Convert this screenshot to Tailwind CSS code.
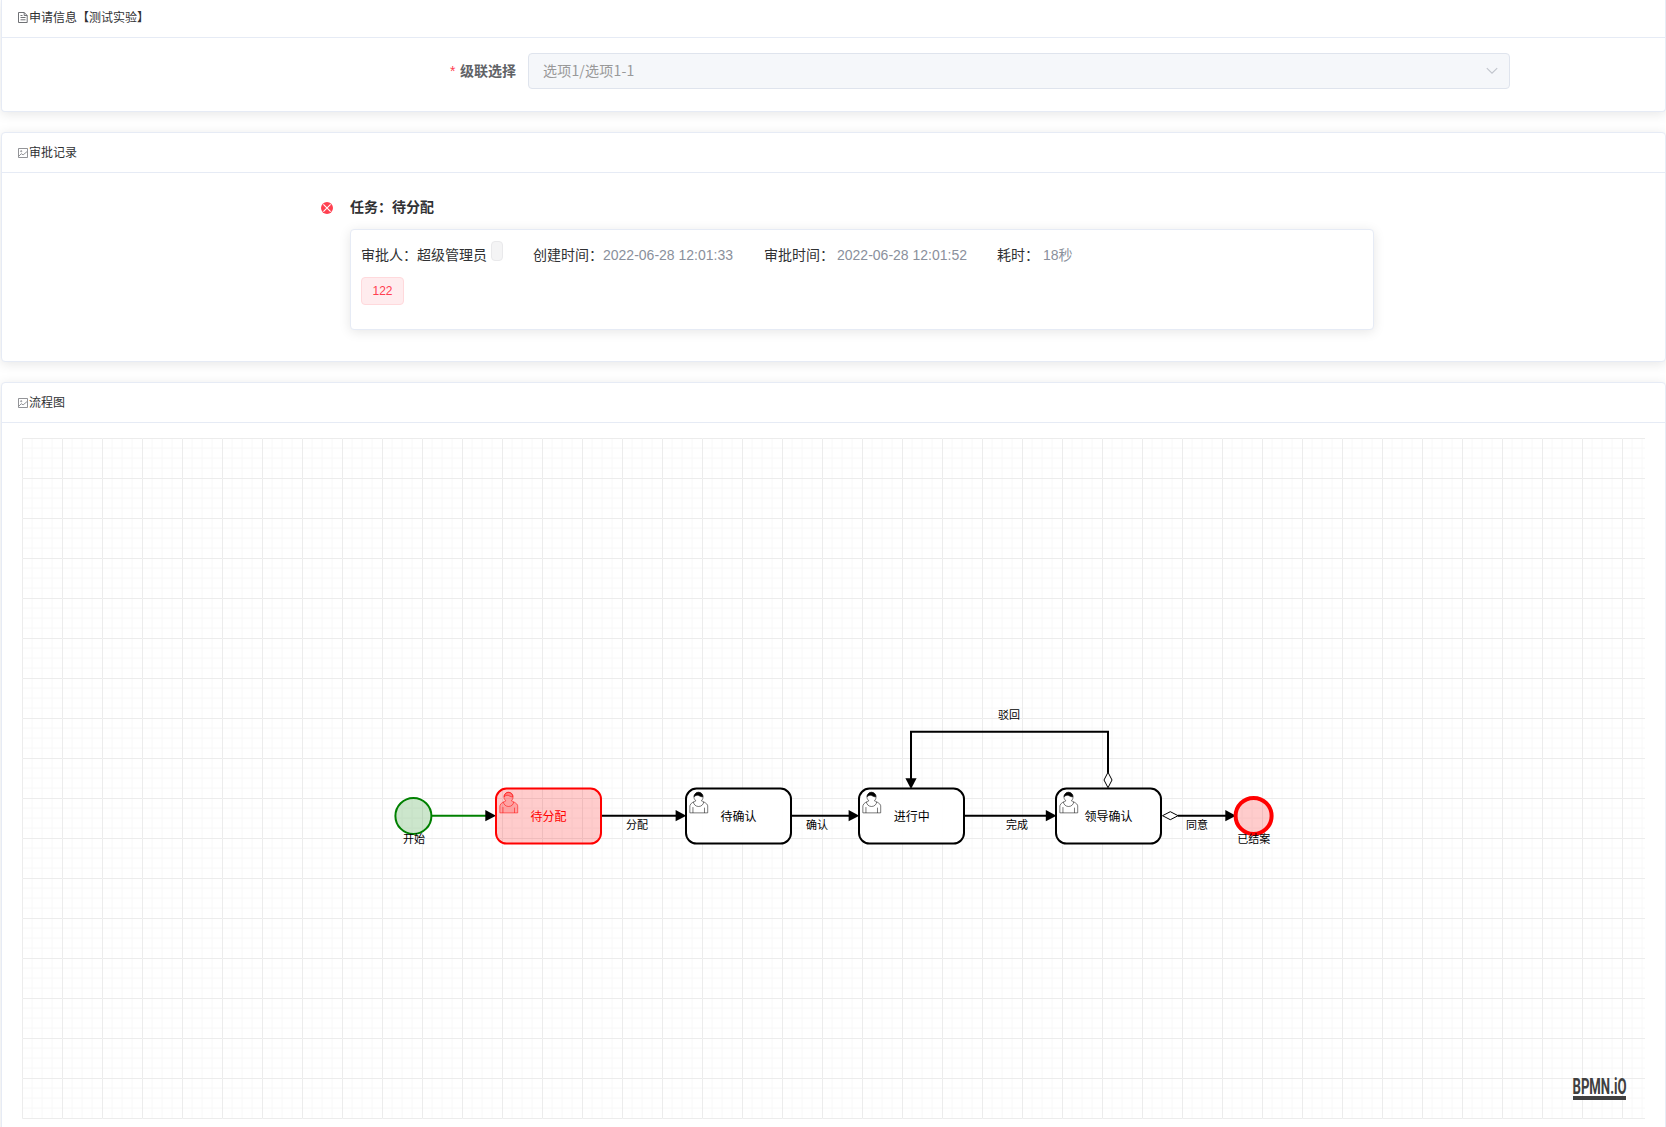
<!DOCTYPE html>
<html lang="zh-CN">
<head>
<meta charset="utf-8">
<title>审批详情</title>
<script src="https://cdn.jsdelivr.net/npm/@tailwindcss/browser@4"></script>
</head>
<body class="h-[1127px] overflow-hidden bg-white pl-px font-['Liberation_Sans','Noto_Sans_CJK_SC',sans-serif] text-sm text-[#303133]">

<section class="h-[112px] rounded-b border border-t-0 border-[#e6ebf5] bg-white shadow-[0_2px_12px_rgba(0,0,0,0.1)]">
  <header class="flex h-[38px] items-center gap-px border-b border-[#e6ebf5] pl-4 pb-px text-xs">
    <svg class="mb-px h-[11px] w-[10px]" viewBox="0 0 10 11" fill="none" stroke="#606266" stroke-width=".9"><path d="M.5.5h5.7l3 3v7H.5zM6.2.5v3h3M2.5 3.5h2M2.5 5.5h5M2.5 7.8h5"/></svg>
    <h2 class="whitespace-nowrap">申请信息【测试实验】</h2>
  </header>
  <div class="flex pt-[15px] pl-[448px]">
    <label class="flex h-9 w-[78px] items-center gap-1 font-bold text-[#606266]"><span class="w-[6px] font-normal text-[#ff4050]">*</span><span class="whitespace-nowrap">级联选择</span></label>
    <div class="flex h-9 w-[982px] items-center justify-between rounded border border-[#dfe4ed] bg-[#f5f7fa] pr-[11px] pl-[14px] font-['Noto_Sans_CJK_SC',sans-serif] text-[#999]">
      <span class="pb-0.5 tracking-[0.2px]">选项1/选项1-1</span>
      <svg class="h-2 w-3" viewBox="0 0 12 8" fill="none" stroke="#c0c4cc" stroke-width="1.1"><path d="M.8 1.2 6 6.2l5.2-5"/></svg>
    </div>
  </div>
</section>

<section class="mt-5 h-[230px] rounded border border-[#e6ebf5] bg-white shadow-[0_2px_12px_rgba(0,0,0,0.1)]">
  <header class="flex h-10 items-center gap-px border-b border-[#e6ebf5] pl-4 text-xs">
    <svg class="h-[10px] w-[10px]" viewBox="0 0 10 10" fill="none" stroke="#77797d" stroke-width=".8"><path d="M.5.5h9v9h-9zM1 8l2.3-2.3 1.8 1.2L9 3.6"/><circle cx="3.2" cy="3.2" r=".6"/></svg>
    <h2>审批记录</h2>
  </header>
  <div class="flex gap-[17px] pt-[24px] pl-[319px]">
    <svg class="mt-[5px] h-3 w-3" viewBox="0 0 12 12"><circle cx="6" cy="6" r="6" fill="#ff4050"/><path d="m2.4 2.4 7.2 7.2m0-7.2L2.4 9.6" stroke="#fff" stroke-width="1.1"/></svg>
    <div class="w-[1024px]">
      <h3 class="h-[32px] font-bold">任务：待分配</h3>
      <div class="h-[101px] rounded border border-[#e6ebf5] bg-white pt-[10px] pl-[10px] shadow-[0_2px_12px_rgba(0,0,0,0.1)]">
        <div class="flex h-[30px] items-center whitespace-nowrap">
          <span class="w-[130px]">审批人：超级管理员</span>
          <span class="mb-[9px] h-5 w-3 rounded border border-[#e9e9eb] bg-[#f4f4f5]"></span>
          <span class="ml-[30px] w-[70px]">创建时间：</span><span class="w-[131px] text-[#8a909c]">2022-06-28 12:01:33</span>
          <span class="ml-[30px] w-[73px]">审批时间：</span><span class="w-[131px] text-[#8a909c]">2022-06-28 12:01:52</span>
          <span class="ml-[29px] w-[46px]">耗时：</span><span class="text-[#8a909c]">18秒</span>
        </div>
        <span class="mt-[7px] flex h-7 w-[43px] items-center justify-center rounded border border-[#ffd9dc] bg-[#ffecee] text-xs text-[#ff4050]">122</span>
      </div>
    </div>
  </div>
</section>

<section class="mt-5 h-[760px] rounded border border-[#e6ebf5] bg-white shadow-[0_2px_12px_rgba(0,0,0,0.1)]">
  <header class="flex h-10 items-center gap-px border-b border-[#e6ebf5] pl-4 text-xs">
    <svg class="h-[10px] w-[10px]" viewBox="0 0 10 10" fill="none" stroke="#77797d" stroke-width=".8"><path d="M.5.5h9v9h-9zM1 8l2.3-2.3 1.8 1.2L9 3.6"/><circle cx="3.2" cy="3.2" r=".6"/></svg>
    <h2>流程图</h2>
  </header>
  <div class="pt-[15px] pl-5">
    <svg class="block h-[681px] w-[1623px] font-['Liberation_Sans','Noto_Sans_CJK_SC',sans-serif]" viewBox="22 438 1623 681">
      <defs>
        <pattern id="grid" x="22" y="438" width="40" height="40" patternUnits="userSpaceOnUse">
          <path d="M10 0v40M20 0v40M30 0v40M0 10h40M0 20h40M0 30h40" stroke="#f8f8f8" fill="none"/>
          <path d="M.5 40V.5H40" stroke="#ececec" fill="none"/>
        </pattern>
        <g id="user" stroke-width=".5">
          <path fill="var(--body)" d="m15,12 c 0.909,-0.845 1.594,-2.049 1.594,-3.385 0,-2.554 -1.805,-4.622 -4.357,-4.622 -2.552,0 -4.288,2.068 -4.288,4.622 0,1.348 0.974,2.562 1.896,3.405 -0.529,0.187 -5.669,2.097 -5.794,4.756 v 6.718 h 17 v -6.718 c 0,-2.298 -5.528,-4.595 -6.051,-4.776 z m -8,6 l 0,5.5 m 11,0 l 0,-5"/>
          <path fill="none" d="m15,12 m 2.162,1.009 c 0,2.447 -2.158,4.431 -4.821,4.431 -2.665,0 -4.822,-1.981 -4.822,-4.431"/>
          <path fill="var(--hair)" d="m15,12 m -6.9,-3.8 c 0,0 2.251,-2.358 4.274,-1.177 2.024,1.181 4.221,1.537 4.124,0.965 -0.098,-0.57 -0.117,-3.791 -4.191,-4.136 -3.575,0.001 -4.208,3.67 -4.207,4.348 z"/>
        </g>
        <path id="arrow" d="M0 0-10.7-5.6V5.6Z"/>
      </defs>
      <rect x="22" y="438" width="1623" height="681" fill="url(#grid)"/>

      <g fill="none" stroke="#000" stroke-width="2">
        <path d="M432 815.7h56" stroke="#008000"/>
        <path d="M602 815.7h76M792 815.7h59M965 815.7h83M1178 815.7h50M1108 773V731.7H911V780"/>
      </g>
      <use href="#arrow" x="496" y="815.7"/><use href="#arrow" x="686.3" y="815.7"/><use href="#arrow" x="859.3" y="815.7"/><use href="#arrow" x="1056.5" y="815.7"/><use href="#arrow" x="1236" y="815.7"/>
      <use href="#arrow" transform="translate(911 789) rotate(90)"/>
      <path d="m1162.5 815.7 7.8-4 7.8 4-7.8 4zM1108 772.3l4 7.7-4 7.7-4-7.7z" fill="#fff" stroke="#000"/>

      <circle cx="413.4" cy="815.9" r="18" fill="#008000" fill-opacity=".2" stroke="#008000" stroke-width="2"/>
      <circle cx="1253.6" cy="815.9" r="18" fill="#f00" fill-opacity=".2" stroke="#f00" stroke-width="4"/>

      <g fill="#fff" fill-opacity=".95" stroke="#000" stroke-width="2">
        <rect x="496" y="788.6" width="105" height="55" rx="10.5" fill="#f00" fill-opacity=".2" stroke="#f00"/>
        <rect x="686" y="788.6" width="105" height="55" rx="10.5"/>
        <rect x="859" y="788.6" width="105" height="55" rx="10.5"/>
        <rect x="1056" y="788.6" width="105" height="55" rx="10.5"/>
      </g>
      <use href="#user" transform="translate(495.6 788.2) scale(1.05)" stroke="#f00" class="[--body:#ff000033] [--hair:#ff000033]"/>
      <g stroke="#000" class="[--body:#fff] [--hair:#000]">
        <use href="#user" transform="translate(685.6 788.2) scale(1.05)"/>
        <use href="#user" transform="translate(858.6 788.2) scale(1.05)"/>
        <use href="#user" transform="translate(1055.6 788.2) scale(1.05)"/>
      </g>

      <g text-anchor="middle" font-size="12">
        <text x="548.6" y="820.5" fill="#f00">待分配</text>
        <text x="738.6" y="820.5">待确认</text>
        <text x="911.8" y="820.5">进行中</text>
        <text x="1108.6" y="820.5">领导确认</text>
      </g>
      <g text-anchor="middle" font-size="11">
        <text x="414" y="843">开始</text>
        <text x="637" y="829">分配</text>
        <text x="817" y="829">确认</text>
        <text x="1009" y="719">驳回</text>
        <text x="1017" y="829">完成</text>
        <text x="1197" y="829">同意</text>
        <text x="1253.7" y="843">已结案</text>
      </g>

      <g fill="#404040">
        <text x="1572.5" y="1094.4" font-family="Roboto, sans-serif" font-weight="700" font-size="21.5" textLength="54" lengthAdjust="spacingAndGlyphs">BPMN.iO</text>
        <rect x="1573" y="1096" width="53" height="4"/>
      </g>
    </svg>
  </div>
</section>
</body>
</html>
